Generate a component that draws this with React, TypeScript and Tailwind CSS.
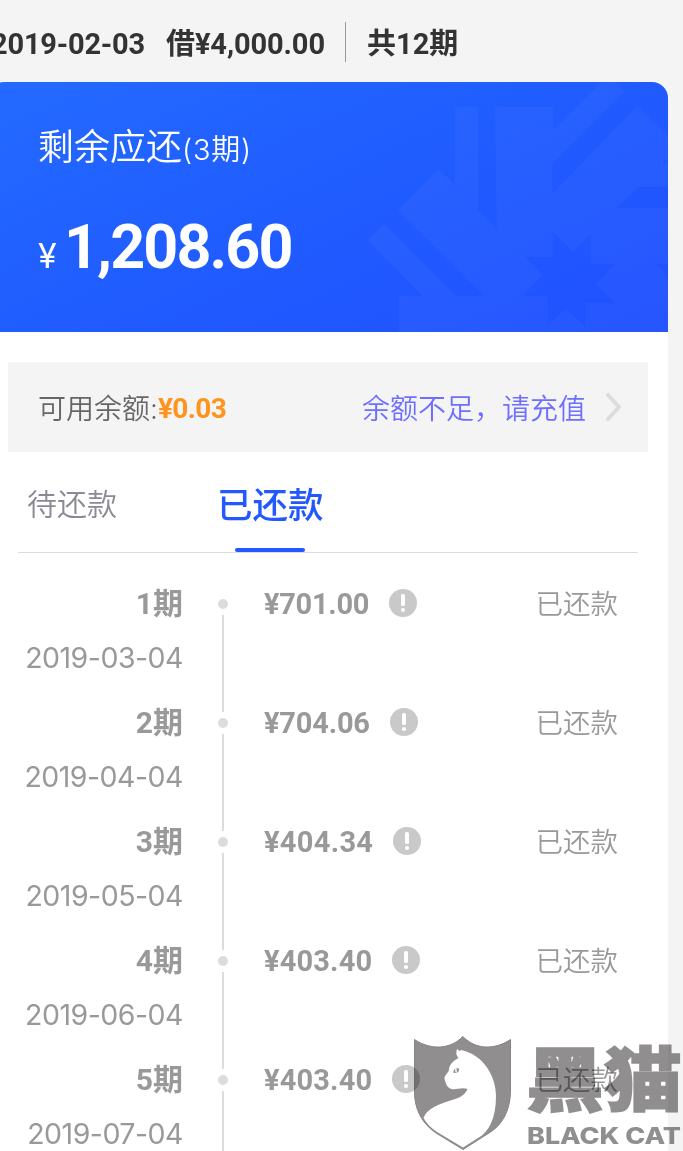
interface Repayment {
  readonly period: number;
  readonly date: string;
  readonly amount: string;
  readonly tracking: string;
}

const REPAYMENTS: readonly Repayment[] = [
  { period: 1, date: "2019-03-04", amount: "701.00", tracking: "tracking-[-0.3px]" },
  { period: 2, date: "2019-04-04", amount: "704.06", tracking: "tracking-[-0.2px]" },
  { period: 3, date: "2019-05-04", amount: "404.34", tracking: "tracking-[0.3px]" },
  { period: 4, date: "2019-06-04", amount: "403.40", tracking: "tracking-[0.15px]" },
  { period: 5, date: "2019-07-04", amount: "403.40", tracking: "tracking-[0.15px]" },
];

const SANS = "font-['Inter','Noto_Sans_CJK_SC',sans-serif]";
const DIN = "font-['Roboto','Noto_Sans_CJK_SC',sans-serif]";

function LoanHeader() {
  return (
    <header className={`${DIN} flex h-[82px] items-center whitespace-nowrap pt-[2px] text-[29px] font-bold text-[#333]`}>
      <span className="ml-[-9px] w-[175px] shrink-0 pt-[5px] tracking-[-0.2px]">2019-02-03</span>
      <span className="w-[179px] shrink-0 pt-[5px] tracking-[-0.1px]">借¥4,000.00</span>
      <span className="h-10 w-px shrink-0 bg-[#999]" />
      <span className="ml-[21px] pt-[5px]">共12期</span>
    </header>
  );
}

function CardPattern() {
  return (
    <svg className="absolute inset-0" width="668" height="250" viewBox="0 0 668 250">
      <g transform="translate(350 -6) scale(0.3333)" fill="#fff" fillOpacity="0.03" fillRule="evenodd">
        <path
          d="M265 278L315 326V92H385V403L440 458L435 92L609 93V162L755 16H795L825 46L607 265V353L863 88L954 180V245L935 263H954V333H863L802 395H954V563H916L954 600V768H147V660H217L52 492L102 442L320 661H405L142 404Z
          M608 467L670 527L723 475V563H795L740 624L795 682H706V752L647 698L593 748V661H519L577 597L525 543H608Z"
        />
      </g>
    </svg>
  );
}

function BalanceCard() {
  return (
    <section className="relative h-[250px] overflow-hidden rounded-tl-[4px_1px] rounded-tr-[16px] bg-[linear-gradient(155deg,#236aff_0%,#205cff_50%,#2150ff_100%)] pl-[38px] text-white">
      <CardPattern />
      <div className={`${SANS} relative flex h-[52px] items-baseline pt-[39px] text-[36px] leading-[52px] font-[350]`}>
        <span>剩余应还</span>
        <span className="text-[29px] tracking-[0.8px]">(3期)</span>
      </div>
      <div className={`${DIN} relative mt-[78px] flex items-baseline leading-[70px]`}>
        <span className="w-[26px] font-['Inter',sans-serif] text-[34px]">¥</span>
        <span className="text-[61px] font-bold tracking-[-1.9px]">1,208.60</span>
      </div>
    </section>
  );
}

function BalanceBar() {
  return (
    <div className="mr-5 ml-2 mt-[30px] flex h-[90px] items-center bg-[#f4f4f4] pr-[26px] pl-[30px] text-[28px]">
      <span className={`${SANS} pt-1 font-[350] text-[#666]`}>可用余额:</span>
      <span className={`${DIN} pt-1 font-bold tracking-[-0.6px] text-[#ff931e]`}>¥0.03</span>
      <span className={`${SANS} ml-auto pt-1 font-[350] text-[#6e6eff]`}>余额不足，请充值</span>
      <svg className="ml-[19px]" width="17" height="28" viewBox="0 0 17 28" fill="none" stroke="#dcdcdc" strokeWidth="4" strokeLinecap="round" strokeLinejoin="round">
        <path d="M3 2L14 14L3 26" />
      </svg>
    </div>
  );
}

function Tabs() {
  return (
    <nav className={`${SANS} mr-[30px] ml-[18px] flex h-[101px] border-b border-[#dcdcdc]`}>
      <div className="w-[199px] pt-[30px] pl-[9px] text-[30px] leading-[45px] font-[350] text-[#8a8a94]">待还款</div>
      <div className="relative w-[106px] whitespace-nowrap pt-[31px] text-[35.5px] leading-[45px] font-medium text-[#2159ff]">
        已还款
        <span className="absolute bottom-0 left-[18px] h-1 w-[70px] rounded-full bg-[#2159ff]" />
      </div>
    </nav>
  );
}

function InfoIcon() {
  return (
    <svg width="28" height="28" viewBox="0 0 28 28">
      <circle cx="14" cy="14" r="14" fill="#c9c9c9" />
      <rect x="12" y="5" width="4" height="12" rx="1.6" fill="#fff" />
      <circle cx="14" cy="21" r="2.1" fill="#fff" />
    </svg>
  );
}

function RepaymentRow({ item }: { readonly item: Repayment }) {
  return (
    <li className="flex h-[119px] text-[#999]">
      <div className="flex w-[183px] flex-col items-end whitespace-nowrap">
        <span className={`${DIN} h-10 text-[30px] leading-10 font-bold`}>{item.period}期</span>
        <span className={`${SANS} mt-[14px] h-10 text-[28.5px] leading-10 font-normal tracking-[-0.5px]`}>{item.date}</span>
      </div>
      <div className="ml-[35px] flex w-[10px] shrink-0 flex-col items-center pt-[15px]">
        <span className="size-[10px] shrink-0 rounded-full bg-[#dcdcdc]" />
        <span className="mt-[6px] h-[97px] w-[2px] shrink-0 bg-[#dcdcdc]" />
      </div>
      <div className="ml-[36px] flex h-10 items-center">
        <span className={`${DIN} pt-[2px] text-[29px] font-bold ${item.tracking}`}>¥{item.amount}</span>
        <span className="mb-[2px] ml-5">
          <InfoIcon />
        </span>
      </div>
      <span className={`${SANS} mr-[50px] ml-auto h-10 text-[27.5px] leading-10 font-[350]`}>已还款</span>
    </li>
  );
}

function BlackCatMark() {
  return (
    <svg className="absolute top-[1030px] left-[405px] mix-blend-multiply" width="278" height="121" viewBox="405 1030 278 121">
      <path
        d="M414.5 1039.500C430 1050 450 1050 462.800 1036.500C476 1050 495 1050 510.500 1039.500V1090C510.500 1112 501 1126 489 1133L463 1149.500L436 1133C421 1123 414.500 1108 414.500 1092Z"
        fill="#918e8f"
        stroke="#858384"
      />
      <path
        d="M457 1049L459.500 1051L461.500 1050C484 1055 496 1077 496 1096C496 1118 489 1132 478 1138L463 1147.500L437 1132Q428 1126 423.500 1118C427 1108 440 1104 452 1100C461 1098 466 1093 467.500 1089C462 1087 456 1090 451.500 1089C446 1087 446 1083 444.500 1079C444 1075 449 1073 449 1069C450 1063 455 1060 458.500 1058Q455 1054 457 1049Z"
        fill="#fff"
      />
      <path d="M453.500 1073C453 1069 456 1067.500 459 1068.500C459.500 1072 457 1073.500 453.500 1073Z" fill="#918e8f" />
      <path d="M455.800 1068.500L456.200 1072.500" stroke="#fff" strokeWidth="1.500" />
      <g fill="#918e8f">
        <text x="526" y="1106" fontSize="70" fontWeight="900" stroke="#918e8f" strokeWidth="1.500" textLength="156" lengthAdjust="spacingAndGlyphs" fontFamily="'Noto Sans CJK SC', sans-serif">
          黑猫
        </text>
        <text x="527" y="1144" fontSize="23" fontWeight="800" textLength="154" lengthAdjust="spacingAndGlyphs" fontFamily="'Inter', sans-serif">
          BLACK CAT
        </text>
      </g>
    </svg>
  );
}

export default function App() {
  return (
    <main className="relative h-[1151px] w-[683px] overflow-hidden bg-[#f4f4f4]">
      <LoanHeader />
      <div className="w-[668px]">
        <BalanceCard />
        <div className="flow-root h-[819px] overflow-hidden bg-white">
          <BalanceBar />
          <Tabs />
          <ul className="mt-[31px]">
            {REPAYMENTS.map((item) => (
              <RepaymentRow key={item.period} item={item} />
            ))}
          </ul>
        </div>
      </div>
      <BlackCatMark />
    </main>
  );
}
